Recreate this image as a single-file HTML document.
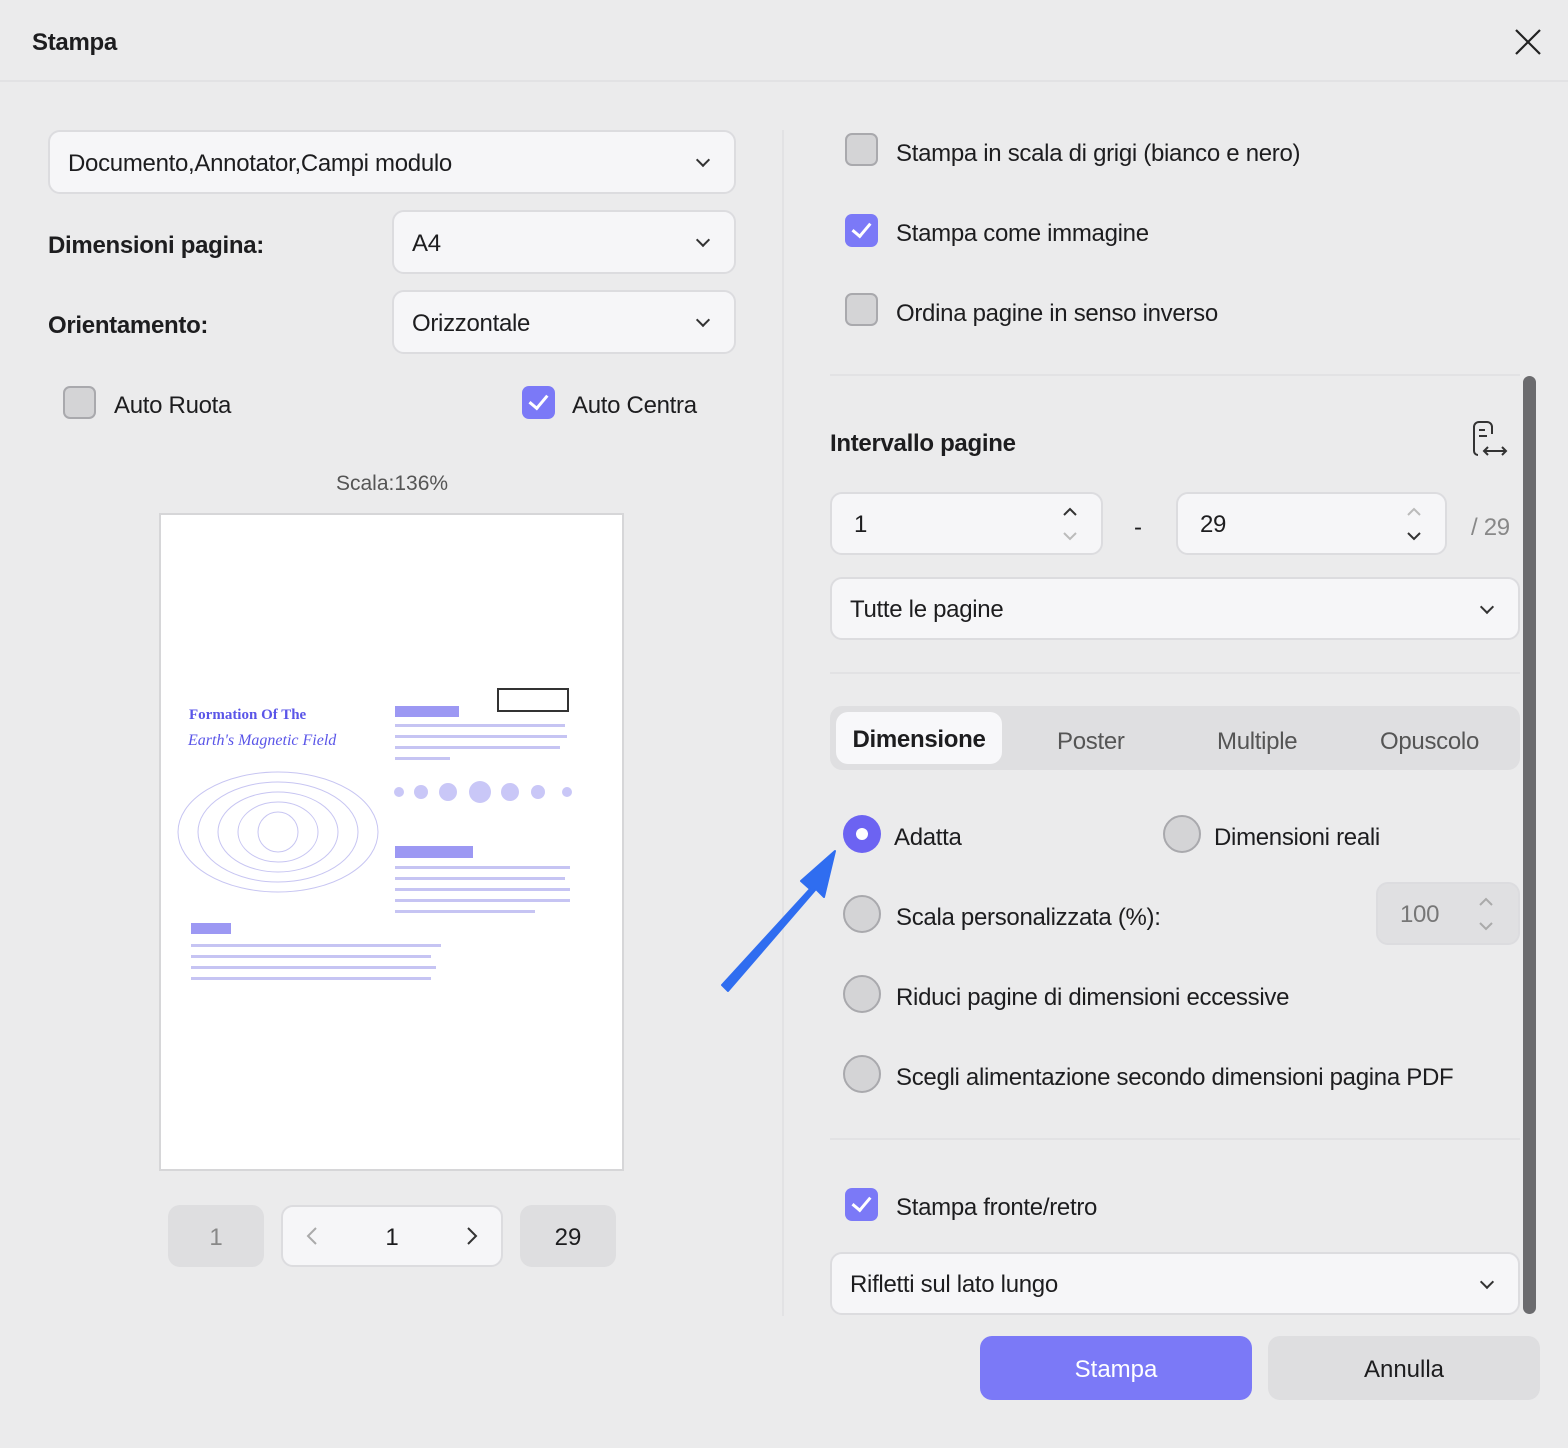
<!DOCTYPE html>
<html><head><meta charset="utf-8"><style>
*{box-sizing:border-box;margin:0;padding:0}
body{width:1568px;height:1448px;background:#ebebec;font-family:"Liberation Sans",sans-serif;color:#1d1d1f;position:relative;overflow:hidden}
.a{position:absolute}
.t{font-size:24px;white-space:nowrap;letter-spacing:-0.3px}
.b{font-weight:bold}
.field{position:absolute;background:#f6f6f8;border:2px solid #dcdcdf;border-radius:12px;font-size:24px;letter-spacing:-0.3px;padding-left:18px;padding-top:3px;display:flex;align-items:center}
.chev{position:absolute;right:26px;top:50%;width:10px;height:10px;border-right:2px solid #333;border-bottom:2px solid #333;transform:translateY(-70%) rotate(45deg)}
.cb{position:absolute;width:33px;height:33px;border-radius:7px;background:#d4d4d6;border:2px solid #a9a9ad}
.cbk{position:absolute;width:33px;height:33px;border-radius:7px;background:#7b79f7}
.cbk:after{content:"";position:absolute;left:11px;top:5px;width:8px;height:15px;border-right:3px solid #fff;border-bottom:3px solid #fff;transform:rotate(40deg)}
.rd{position:absolute;width:38px;height:38px;border-radius:50%;background:#d4d4d6;border:2px solid #a9a9ad}
.rdon{position:absolute;width:38px;height:38px;border-radius:50%;background:#6c63f2}
.rdon:after{content:"";position:absolute;left:13px;top:13px;width:12px;height:12px;border-radius:50%;background:#fff}
.btn{position:absolute;border-radius:12px;font-size:24px;display:flex;align-items:center;justify-content:center;padding-top:3px}
.pv{position:absolute;color:#5a55e8;white-space:nowrap}
</style></head><body>
<div class="a" style="left:0;top:0;width:1568px;height:82px;border-bottom:2px solid #e2e2e4"></div>
<div class="a t b" style="left:32px;top:29px">Stampa</div>
<svg class="a" style="left:1514px;top:28px" width="28" height="28"><path d="M2 2L26 26M26 2L2 26" stroke="#222" stroke-width="2.2"/></svg>

<div class="field" style="left:48px;top:130px;width:688px;height:64px">Documento,Annotator,Campi modulo<span class="chev"></span></div>
<div class="a t b" style="left:48px;top:232px">Dimensioni pagina:</div>
<div class="field" style="left:392px;top:210px;width:344px;height:64px">A4<span class="chev"></span></div>
<div class="a t b" style="left:48px;top:312px">Orientamento:</div>
<div class="field" style="left:392px;top:290px;width:344px;height:64px">Orizzontale<span class="chev"></span></div>
<div class="cb" style="left:63px;top:386px"></div><div class="a t" style="left:114px;top:392px">Auto Ruota</div>
<div class="cbk" style="left:522px;top:386px"></div><div class="a t" style="left:572px;top:392px">Auto Centra</div>
<div class="a" style="left:336px;top:472px;font-size:21px;color:#555">Scala:136%</div>

<div class="a" style="left:159px;top:513px;width:465px;height:658px;background:#fff;border:2px solid #d6d6d8"></div>
<div class="a" style="left:497px;top:688px;width:72px;height:24px;border:2px solid #333"></div>
<div class="pv" style="left:189px;top:707px;font-family:'Liberation Serif',serif;font-weight:bold;font-size:15px">Formation Of The</div>
<div class="pv" style="left:188px;top:732px;font-family:'Liberation Serif',serif;font-style:italic;font-size:16px">Earth's Magnetic Field</div>
<div class="a" style="left:395px;top:706px;width:64px;height:11px;background:#9c98f3"></div>
<div class="a" style="left:395px;top:846px;width:78px;height:12px;background:#9c98f3"></div>
<div class="a" style="left:191px;top:923px;width:40px;height:11px;background:#9c98f3"></div>
<svg class="a" style="left:170px;top:760px" width="420" height="240">
<g fill="none" stroke="#c7c5f2" stroke-width="1">
<ellipse cx="108" cy="72" rx="100" ry="60"/><ellipse cx="108" cy="72" rx="80" ry="50"/><ellipse cx="108" cy="72" rx="60" ry="40"/><ellipse cx="108" cy="72" rx="40" ry="30"/><circle cx="108" cy="72" r="20"/>
</g>
<g fill="#c9c7f7"><circle cx="229" cy="32" r="5"/><circle cx="251" cy="32" r="7"/><circle cx="278" cy="32" r="9"/><circle cx="310" cy="32" r="11"/><circle cx="340" cy="32" r="9"/><circle cx="368" cy="32" r="7"/><circle cx="397" cy="32" r="5"/></g>
<g fill="#c6c4f3"><rect x="225" y="106" width="175" height="3"/><rect x="225" y="117" width="170" height="3"/><rect x="225" y="128" width="175" height="3"/><rect x="225" y="139" width="175" height="3"/><rect x="225" y="150" width="140" height="3"/>
<rect x="21" y="184" width="250" height="3"/><rect x="21" y="195" width="240" height="3"/><rect x="21" y="206" width="245" height="3"/><rect x="21" y="217" width="240" height="3"/></g>
</svg>
<svg class="a" style="left:395px;top:722px" width="180" height="40"><g fill="#c6c4f3"><rect y="2" width="170" height="3"/><rect y="13" width="172" height="3"/><rect y="24" width="165" height="3"/><rect y="35" width="55" height="3"/></g></svg>

<div class="btn" style="left:168px;top:1205px;width:96px;height:62px;background:#dedee0;color:#888">1</div>
<div class="btn" style="left:281px;top:1205px;width:222px;height:62px;background:#f6f6f8;border:2px solid #dcdcdf">1</div>
<svg class="a" style="left:305px;top:1226px" width="14" height="20"><path d="M11 2L3 10L11 18" fill="none" stroke="#aaa" stroke-width="2"/></svg>
<svg class="a" style="left:465px;top:1226px" width="14" height="20"><path d="M3 2L11 10L3 18" fill="none" stroke="#333" stroke-width="2"/></svg>
<div class="btn" style="left:520px;top:1205px;width:96px;height:62px;background:#dedee0">29</div>

<div class="a" style="left:782px;top:130px;width:2px;height:1186px;background:#e2e2e4"></div>

<div class="cb" style="left:845px;top:133px"></div><div class="a t" style="left:896px;top:140px">Stampa in scala di grigi (bianco e nero)</div>
<div class="cbk" style="left:845px;top:214px"></div><div class="a t" style="left:896px;top:220px">Stampa come immagine</div>
<div class="cb" style="left:845px;top:293px"></div><div class="a t" style="left:896px;top:300px">Ordina pagine in senso inverso</div>
<div class="a" style="left:830px;top:374px;width:690px;height:2px;background:#e2e2e4"></div>
<div class="a" style="left:1523px;top:376px;width:13px;height:938px;border-radius:7px;background:#6b6b6e"></div>
<div class="a t b" style="left:830px;top:430px">Intervallo pagine</div>
<svg class="a" style="left:1470px;top:420px" width="40" height="40"><g fill="none" stroke="#333" stroke-width="2"><path d="M22 14V7a5 5 0 0 0-5-5H9a5 5 0 0 0-5 5v24a4 4 0 0 0 4 4"/><path d="M9 10h6M9 16h8"/><path d="M14 31h22M18 27l-4 4 4 4M32 27l4 4-4 4"/></g></svg>
<div class="field" style="left:830px;top:492px;width:273px;height:63px;padding-left:22px">1</div>
<svg class="a" style="left:1062px;top:506px" width="16" height="36"><path d="M2 9L8 3L14 9" fill="none" stroke="#333" stroke-width="2"/><path d="M2 27L8 33L14 27" fill="none" stroke="#bbb" stroke-width="2"/></svg>
<div class="a t" style="left:1134px;top:514px">-</div>
<div class="field" style="left:1176px;top:492px;width:271px;height:63px;padding-left:22px">29</div>
<svg class="a" style="left:1406px;top:506px" width="16" height="36"><path d="M2 9L8 3L14 9" fill="none" stroke="#bbb" stroke-width="2"/><path d="M2 27L8 33L14 27" fill="none" stroke="#333" stroke-width="2"/></svg>
<div class="a t" style="left:1471px;top:514px;color:#888">/ 29</div>
<div class="field" style="left:830px;top:577px;width:690px;height:63px">Tutte le pagine<span class="chev"></span></div>
<div class="a" style="left:830px;top:672px;width:690px;height:2px;background:#e2e2e4"></div>

<div class="a" style="left:830px;top:706px;width:690px;height:64px;border-radius:12px;background:#dfdfe1"></div>
<div class="btn" style="left:836px;top:712px;width:166px;height:52px;background:#f8f8fa;font-weight:bold;letter-spacing:-0.3px">Dimensione</div>
<div class="a t" style="left:1057px;top:728px;color:#555">Poster</div>
<div class="a t" style="left:1217px;top:728px;color:#555">Multiple</div>
<div class="a t" style="left:1380px;top:728px;color:#555">Opuscolo</div>

<div class="rdon" style="left:843px;top:815px"></div><div class="a t" style="left:894px;top:824px">Adatta</div>
<div class="rd" style="left:1163px;top:815px"></div><div class="a t" style="left:1214px;top:824px">Dimensioni reali</div>
<div class="rd" style="left:843px;top:895px"></div><div class="a t" style="left:896px;top:904px">Scala personalizzata (%):</div>
<div class="field" style="left:1376px;top:882px;width:144px;height:63px;background:#e0e0e2;color:#777;padding-left:22px">100</div>
<svg class="a" style="left:1478px;top:896px" width="16" height="36"><path d="M2 9L8 3L14 9M2 27L8 33L14 27" fill="none" stroke="#aaa" stroke-width="2"/></svg>
<div class="rd" style="left:843px;top:975px"></div><div class="a t" style="left:896px;top:984px">Riduci pagine di dimensioni eccessive</div>
<div class="rd" style="left:843px;top:1055px"></div><div class="a t" style="left:896px;top:1064px">Scegli alimentazione secondo dimensioni pagina PDF</div>
<div class="a" style="left:830px;top:1138px;width:690px;height:2px;background:#e2e2e4"></div>
<div class="cbk" style="left:845px;top:1188px"></div><div class="a t" style="left:896px;top:1194px">Stampa fronte/retro</div>
<div class="field" style="left:830px;top:1252px;width:690px;height:63px">Rifletti sul lato lungo<span class="chev"></span></div>

<svg class="a" style="left:718px;top:845px" width="124" height="150"><path d="M4 140L92 44L83 36L117 6L106 52L98 44L10 146Z" fill="#2f6df0" stroke="#2f6df0" stroke-width="2" stroke-linejoin="round"/></svg>

<div class="btn" style="left:980px;top:1336px;width:272px;height:64px;background:#7b79f7;color:#fff">Stampa</div>
<div class="btn" style="left:1268px;top:1336px;width:272px;height:64px;background:#dedee0">Annulla</div>
</body></html>
